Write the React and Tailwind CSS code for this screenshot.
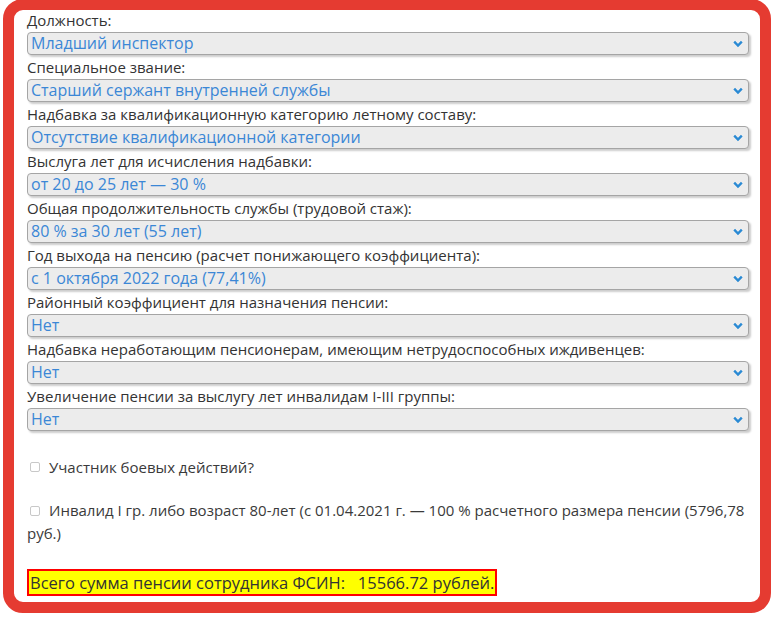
const fields = [
  { label: 'Должность:', value: 'Младший инспектор' },
  { label: 'Специальное звание:', value: 'Старший сержант внутренней службы' },
  { label: 'Надбавка за квалификационную категорию летному составу:', value: 'Отсутствие квалификационной категории' },
  { label: 'Выслуга лет для исчисления надбавки:', value: 'от 20 до 25 лет — 30 %' },
  { label: 'Общая продолжительность службы (трудовой стаж):', value: '80 % за 30 лет (55 лет)' },
  { label: 'Год выхода на пенсию (расчет понижающего коэффициента):', value: 'с 1 октября 2022 года (77,41%)' },
  { label: 'Районный коэффициент для назначения пенсии:', value: 'Нет' },
  { label: 'Надбавка неработающим пенсионерам, имеющим нетрудоспособных иждивенцев:', value: 'Нет' },
  { label: 'Увеличение пенсии за выслугу лет инвалидам I-III группы:', value: 'Нет' },
];

function Field({ label, value }) {
  return (
    <div className="mb-[2px]">
      <div className="text-[15px] leading-[20px] text-[#333]">{label}</div>
      <div className="relative mt-[2px]">
        <select
          defaultValue={value}
          className="block w-full h-[23px] appearance-none rounded-[4px] border border-[#a5a5a5] bg-[#ececec] pl-[3px] pr-6 text-[16px] leading-[21px] text-[#3b87d6] shadow-[2px_2px_2px_rgba(0,0,0,0.2)] outline-none"
          style={{ fontFamily: '"Open Sans", sans-serif' }}
        >
          <option value={value}>{value}</option>
        </select>
        <svg
          viewBox="0 0 10 7"
          className="pointer-events-none absolute right-[6px] top-1/2 -translate-y-1/2 w-[10px] h-[7px]"
        >
          <polyline points="1.2,1.2 5,5 8.8,1.2" fill="none" stroke="#2a8ad4" strokeWidth="2.4" />
        </svg>
      </div>
    </div>
  );
}

export default function App() {
  return (
    <div className="bg-white w-[773px] h-[620px] overflow-hidden" style={{ fontFamily: '"Open Sans", sans-serif' }}>
      <div className="-mt-[1px] ml-[3px] w-[768px] h-[614px] rounded-[20px] border-[11px] border-[#e53b31] bg-white pl-[13px] pr-[11px]">
        {fields.map((f) => (
          <Field key={f.label} label={f.label} value={f.value} />
        ))}

        <div className="mt-[24px] flex items-center text-[15px] leading-[24px] text-[#3a3a3a]">
          <span className="ml-[3px] mr-[9px] inline-block w-[10px] h-[10px] rounded-[2px] border border-[#c8c8c8] bg-white" />
          Участник боевых действий?
        </div>

        <div className="mt-[20px] text-[15px] leading-[23px] text-[#3a3a3a]">
          <span className="ml-[3px] mr-[9px] inline-block w-[10px] h-[10px] rounded-[2px] border border-[#c8c8c8] bg-white" />
          Инвалид I гр. либо возраст 80-лет (с 01.04.2021 г. — 100 % расчетного размера пенсии (5796,78 руб.)
        </div>

        <div className="mt-[24px]">
          <span className="inline-block border-2 border-[#ff0000] bg-[#ffff00] px-[1px] text-[16.5px] leading-[23px] text-[#333]">
            Всего сумма пенсии сотрудника ФСИН:&nbsp;&nbsp; 15566.72 рублей.
          </span>
        </div>
      </div>
    </div>
  );
}
